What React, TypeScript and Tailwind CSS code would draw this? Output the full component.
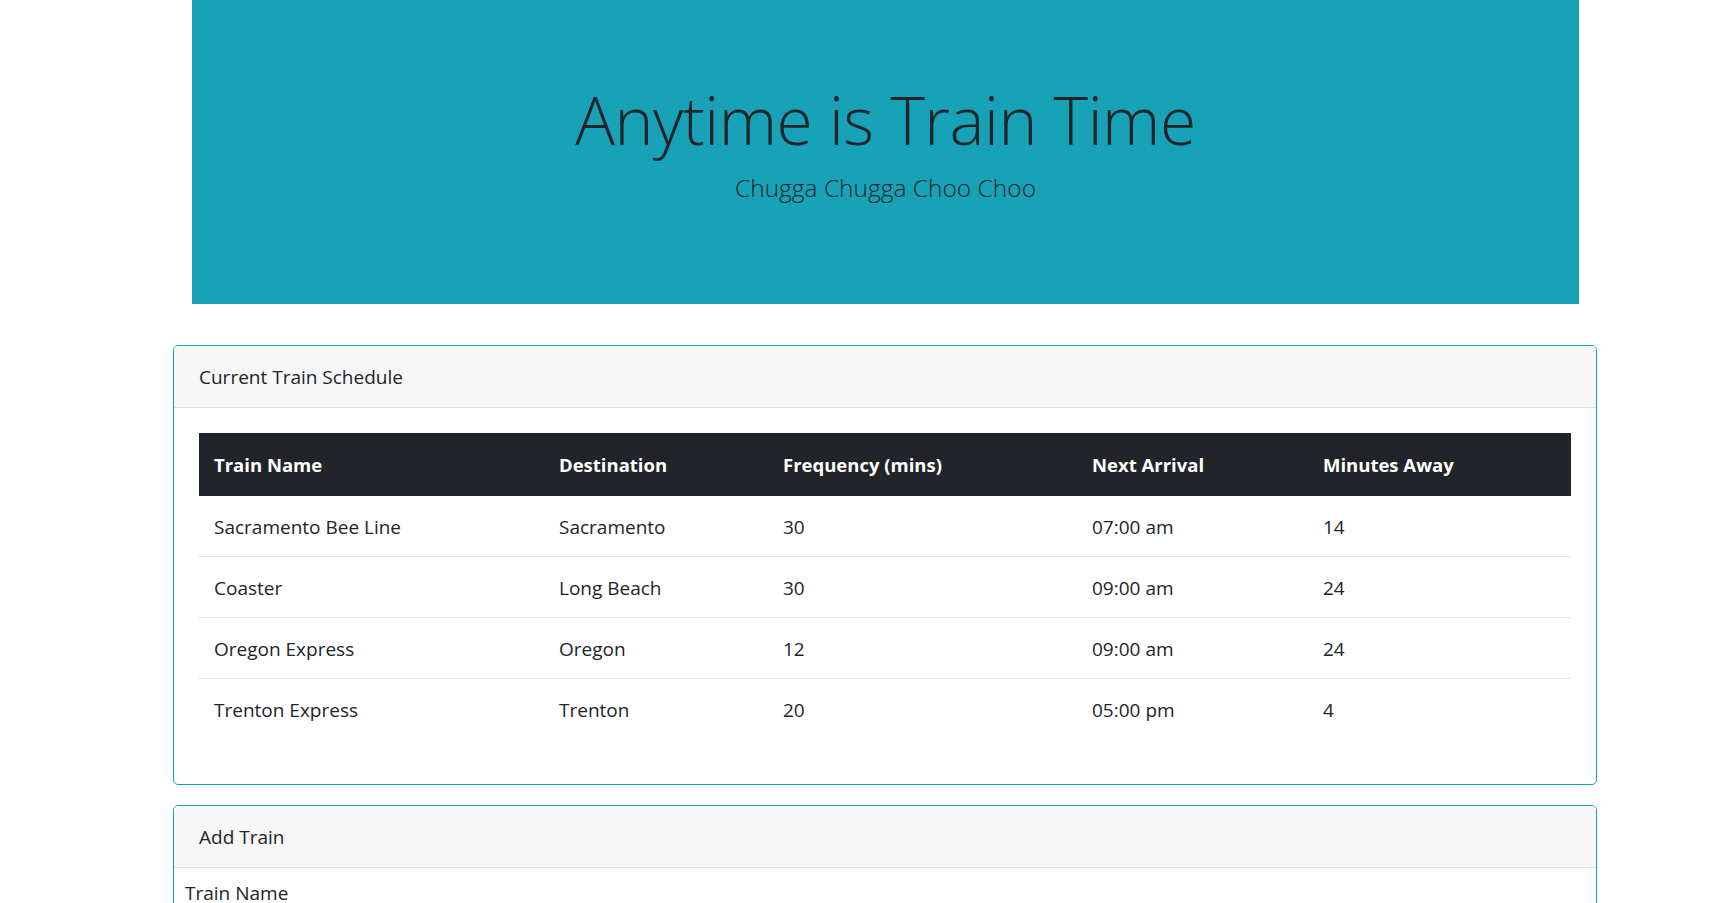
const trains = [
  { name: "Sacramento Bee Line", dest: "Sacramento", freq: "30", next: "07:00 am", away: "14" },
  { name: "Coaster", dest: "Long Beach", freq: "30", next: "09:00 am", away: "24" },
  { name: "Oregon Express", dest: "Oregon", freq: "12", next: "09:00 am", away: "24" },
  { name: "Trenton Express", dest: "Trenton", freq: "20", next: "05:00 pm", away: "4" },
];

export default function App() {
  return (
    <div className="min-h-screen bg-white text-[#212529] font-['Open_Sans',sans-serif] text-[20px] leading-[30px]">
      {/* jumbotron */}
      <div className="ml-[192px] w-[1387px] h-[304px] bg-[#18a2b8] flex flex-col items-center pt-[77px]">
        <h1 className="text-[66px] font-light leading-[84px] tracking-[-0.5px]">Anytime is Train Time</h1>
        <p className="text-[24.5px] font-light leading-[36px] mt-[9px]">Chugga Chugga Choo Choo</p>
      </div>

      <div className="ml-[173px] w-[1424px] mt-[41px] flex flex-col gap-[20px]">
        <div className="border border-[#17a2b8] rounded-[5px] overflow-hidden">
          <div className="bg-[#f7f7f7] border-b border-[#dfdfdf] px-[25px] pt-[16px] pb-[15px] text-[19px]">Current Train Schedule</div>
          <div className="px-[25px] pt-[25px] pb-[45px]">
            <table className="w-full border-collapse text-[19px]">
              <colgroup>
                <col className="w-[345px]" />
                <col className="w-[224px]" />
                <col className="w-[309px]" />
                <col className="w-[231px]" />
                <col />
              </colgroup>
              <thead>
                <tr className="bg-[#212529] text-white">
                  {["Train Name", "Destination", "Frequency (mins)", "Next Arrival", "Minutes Away"].map((h) => (
                    <th key={h} className="text-left font-bold px-[15px] pt-[17px] pb-[16px] leading-[30px] text-[18.5px]">{h}</th>
                  ))}
                </tr>
              </thead>
              <tbody>
                {trains.map((t, i) => (
                  <tr key={t.name} className={i > 0 ? "border-t border-[#dee2e6]" : ""}>
                    <td className="px-[15px] pt-[16px] pb-[14px]">{t.name}</td>
                    <td className="px-[15px] pt-[16px] pb-[14px]">{t.dest}</td>
                    <td className="px-[15px] pt-[16px] pb-[14px]">{t.freq}</td>
                    <td className="px-[15px] pt-[16px] pb-[14px]">{t.next}</td>
                    <td className="px-[15px] pt-[16px] pb-[14px]">{t.away}</td>
                  </tr>
                ))}
              </tbody>
            </table>
          </div>
        </div>

        <div className="border border-[#17a2b8] rounded-[5px] overflow-hidden">
          <div className="bg-[#f7f7f7] border-b border-[#dfdfdf] px-[25px] pt-[16px] pb-[15px] text-[19px]">Add Train</div>
          <div className="px-[11px] pt-[10px] pb-[40px]">
            <label className="text-[19px]">Train Name</label>
          </div>
        </div>
      </div>
    </div>
  );
}
